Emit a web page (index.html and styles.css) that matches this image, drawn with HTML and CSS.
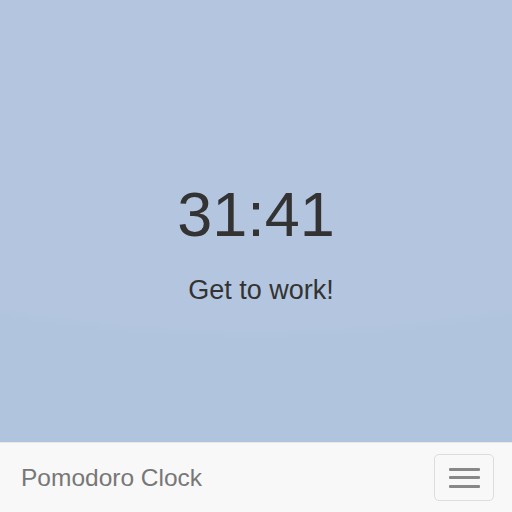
FILE: index.html
```html
<!DOCTYPE html>
<html lang="en">
<head>
<meta charset="utf-8">
<title>Pomodoro Clock</title>
<link rel="stylesheet" href="styles.css">
</head>
<body>
<div class="page">
  <main class="stage">
    <h1 class="timer">31:41</h1>
    <p class="status">Get to work!</p>
  </main>
  <nav class="navbar">
    <span class="brand">Pomodoro Clock</span>
    <button class="toggle" type="button" aria-label="Toggle navigation">
      <span class="bar"></span>
      <span class="bar"></span>
      <span class="bar"></span>
    </button>
  </nav>
</div>
</body>
</html>
```
FILE: styles.css
```css
html, body {
  margin: 0;
  padding: 0;
  height: 100%;
}
body {
  font-family: "Liberation Sans", Arial, Helvetica, sans-serif;
  color: #333;
}
.page {
  display: flex;
  flex-direction: column;
  height: 100vh;
  overflow: hidden;
}
.stage {
  flex: 1;
  background: radial-gradient(ellipse 724px 340px at 50% 0, #b4c6df 0%, #b4c6df 96%, #b0c4de 100%);
  background-color: #b0c4de;
  text-align: center;
  padding-top: 179px;
  box-sizing: border-box;
}
.timer {
  margin: 0;
  font-size: 63px;
  line-height: 70px;
  font-weight: 400;
  color: #333;
}
.status {
  margin: 22px 0 0;
  padding-left: 10px;
  font-size: 27px;
  line-height: 38px;
  color: #333;
}
.navbar {
  flex: 0 0 70px;
  box-sizing: border-box;
  height: 70px;
  background: #f8f8f8;
  border-top: 1px solid #e7e7e7;
  display: flex;
  align-items: center;
  justify-content: space-between;
  padding: 0 18px 0 21px;
}
.brand {
  font-size: 24.5px;
  color: #777;
}
.toggle {
  width: 60px;
  height: 47px;
  box-sizing: border-box;
  border: 1px solid #ddd;
  border-radius: 5px;
  background: transparent;
  display: flex;
  flex-direction: column;
  align-items: center;
  justify-content: center;
  gap: 5.5px;
  padding: 0;
}
.bar {
  display: block;
  width: 31px;
  height: 3px;
  border-radius: 1px;
  background: #888;
}
```
